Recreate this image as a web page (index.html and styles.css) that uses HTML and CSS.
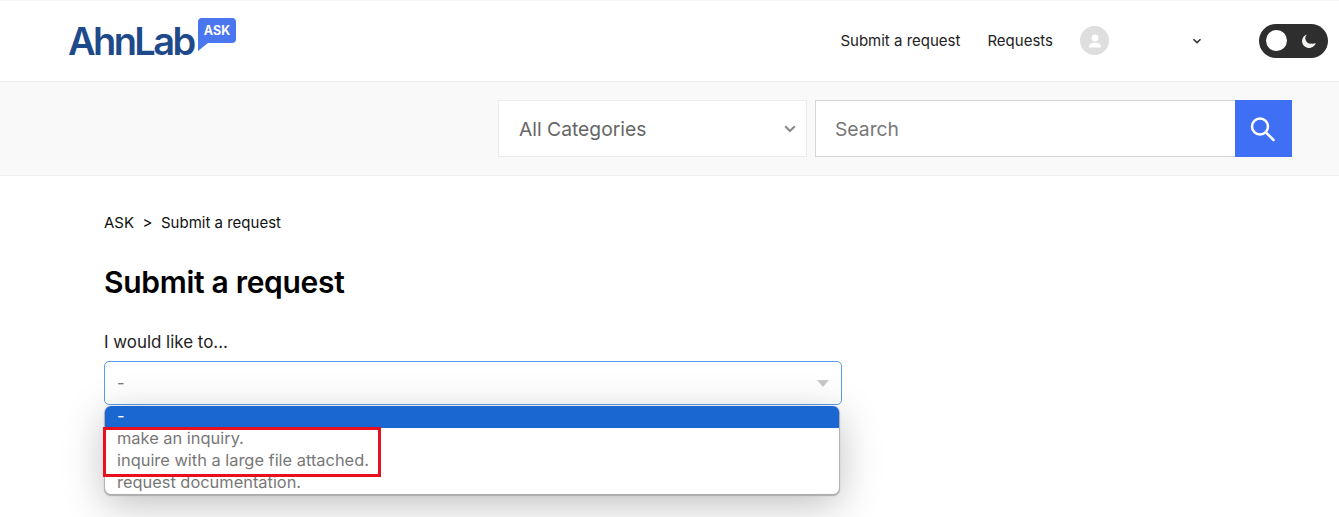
FILE: index.html
```html
<!DOCTYPE html>
<html>
<head>
  <title>Submit a request</title>
  <link rel="stylesheet" href="styles.css">
</head>
<body>
  <header class="topbar">
    <a class="logo">
      <span class="logo-name">AhnLab</span>
      <svg class="logo-ask" width="39" height="33" viewBox="0 0 39 33">
        <path d="M4 0H35a4 4 0 0 1 4 4V21a4 4 0 0 1-4 4H11L1 33V4a4 4 0 0 1 3-4z" fill="#4a76f0"/>
        <text x="20" y="17" text-anchor="middle" class="logo-ask-text">ASK</text>
      </svg>
    </a>
    <nav class="nav">
      <a>Submit a request</a>
      <a>Requests</a>
      <span class="avatar">
        <svg width="16" height="16" viewBox="0 0 16 16" fill="#fff">
          <circle cx="8" cy="5" r="3.4"/>
          <path d="M1.8 14.5c0-3.4 2.8-4.8 6.2-4.8s6.2 1.4 6.2 4.8z"/>
        </svg>
      </span>
      <svg class="nav-caret" width="10" height="6" viewBox="0 0 10 6" fill="none" stroke="#333" stroke-width="1.6"><path d="M1.5 1.2L5 4.6l3.5-3.4"/></svg>
      <span class="toggle">
        <span class="toggle-knob"></span>
        <svg width="16" height="16" viewBox="0 0 16 16"><path d="M6 1.4a7 7 0 1 0 8.8 8.6 6 6 0 0 1-4.2 0.6 5.4 5.4 0 0 1-4.6-9.2z" fill="#f3f3ee"/></svg>
      </span>
    </nav>
  </header>

  <div class="searchbar">
    <div class="category">
      <span>All Categories</span>
      <svg width="12" height="8" viewBox="0 0 12 8" fill="none" stroke="#888" stroke-width="2"><path d="M1.2 1.2L6 6l4.8-4.8"/></svg>
    </div>
    <div class="search-input">Search</div>
    <div class="search-btn">
      <svg width="25" height="26" viewBox="0 0 25 26" fill="none" stroke="#fff" stroke-width="2.5" stroke-linecap="round">
        <circle cx="10" cy="10.5" r="8"/>
        <path d="M16 16.5L23.5 24"/>
      </svg>
    </div>
  </div>

  <main class="content">
    <div class="crumbs"><span>ASK</span><span>&gt;</span><span>Submit a request</span></div>
    <h1>Submit a request</h1>
    <label class="field-label">I would like to...</label>
    <div class="field">
      <div class="select-box">
        <span>-</span>
        <span class="select-arrow"></span>
      </div>
      <ul class="menu">
        <li class="selected">-</li>
        <li>make an inquiry.</li>
        <li>inquire with a large file attached.</li>
        <li>request documentation.</li>
      </ul>
      <div class="highlight"></div>
    </div>
  </main>
</body>
</html>
```

FILE: styles.css
```css
html, body {
  margin: 0;
  height: 517px;
  overflow: hidden;
  background: #fff;
}

body {
  font-family: Inter, "Noto Sans", sans-serif;
  color: #111;
}

.topbar {
  height: 80px;
  border-top: 1px solid #f4f4f4;
  border-bottom: 1px solid #ededed;
  display: flex;
  align-items: center;
  justify-content: space-between;
  padding: 0 11px 0 68px;
}

.logo {
  display: flex;
  align-items: flex-start;
  height: 50px;
  margin-top: -4px;
}

.logo-name {
  font-size: 38px;
  line-height: 50px;
  font-weight: 600;
  letter-spacing: -2.6px;
  color: #1e4a8c;
  margin-top: 2px;
}

.logo-ask {
  margin: 4px 0 0 3px;
}

.logo-ask-text {
  font: 700 12.5px Inter, sans-serif;
  fill: #fff;
}

.nav {
  display: flex;
  align-items: center;
  font-size: 15px;
  color: #222;
  margin-top: -1px;
}

.nav a {
  margin-right: 27px;
}

.avatar {
  width: 29px;
  height: 29px;
  border-radius: 50%;
  background: #dedede;
  display: flex;
  align-items: center;
  justify-content: center;
}

.nav-caret {
  margin: 0 57px 0 83px;
}

.toggle {
  width: 69px;
  height: 34px;
  border-radius: 17px;
  background: #2e2e2e;
  display: flex;
  align-items: center;
  justify-content: space-between;
  padding: 0 11px 0 7px;
  box-sizing: border-box;
}

.toggle-knob {
  width: 21px;
  height: 21px;
  border-radius: 50%;
  background: #fff;
}

.searchbar {
  height: 94px;
  background: #f9f9f9;
  border-bottom: 1px solid #f0f0f0;
  box-sizing: border-box;
  display: flex;
  align-items: center;
  padding: 0 47px 0 498px;
  font-size: 19.3px;
  color: #666;
}

.category {
  width: 309px;
  height: 57px;
  box-sizing: border-box;
  background: #fff;
  border: 1px solid #ececec;
  display: flex;
  align-items: center;
  justify-content: space-between;
  padding: 0 10px 0 20px;
  margin-right: 8px;
}

.search-input {
  width: 420px;
  height: 57px;
  box-sizing: border-box;
  background: #fff;
  border: 1px solid #d6d6d6;
  border-right: 0;
  display: flex;
  align-items: center;
  padding-left: 19px;
  color: #777;
}

.search-btn {
  width: 57px;
  height: 57px;
  background: #3f6ff5;
  display: flex;
  align-items: center;
  justify-content: center;
  box-sizing: border-box;
  padding-right: 3px;
}

.content {
  padding: 37px 0 0 104px;
}

.crumbs {
  display: flex;
  gap: 8.5px;
  font-size: 15px;
  line-height: 20px;
}

h1 {
  font-size: 30px;
  line-height: 38px;
  font-weight: 600;
  letter-spacing: -0.3px;
  color: #000;
  margin: 30px 0 0;
}

.field-label {
  display: block;
  font-size: 16.9px;
  line-height: 22px;
  margin-top: 30px;
  color: #222;
}

.field {
  position: relative;
  width: 738px;
  margin-top: 8px;
}

.select-box {
  height: 44px;
  box-sizing: border-box;
  border: 1px solid #5a9df0;
  border-radius: 5px;
  display: flex;
  align-items: center;
  justify-content: space-between;
  padding: 0 12px;
  font-size: 16.4px;
  color: #777;
}

.select-arrow {
  width: 0;
  height: 0;
  border-left: 6px solid transparent;
  border-right: 6px solid transparent;
  border-top: 7px solid #c8c8c8;
}

.menu {
  position: absolute;
  top: 45px;
  left: 1px;
  width: 734px;
  margin: 0;
  padding: 0;
  list-style: none;
  background: #fff;
  border-radius: 6px;
  overflow: hidden;
  box-shadow: 0 1px 1px 1px #adadad, 0 10px 40px rgba(0, 0, 0, 0.26);
  font-size: 16.4px;
  line-height: 20px;
  color: #777;
}

.menu li {
  height: 22px;
  padding-left: 12px;
}

.menu .selected {
  background: #1a67d2;
  color: #fff;
}

.highlight {
  position: absolute;
  top: 66px;
  left: -1px;
  width: 278px;
  height: 50px;
  box-sizing: border-box;
  border: 3px solid #e8101c;
}
```
